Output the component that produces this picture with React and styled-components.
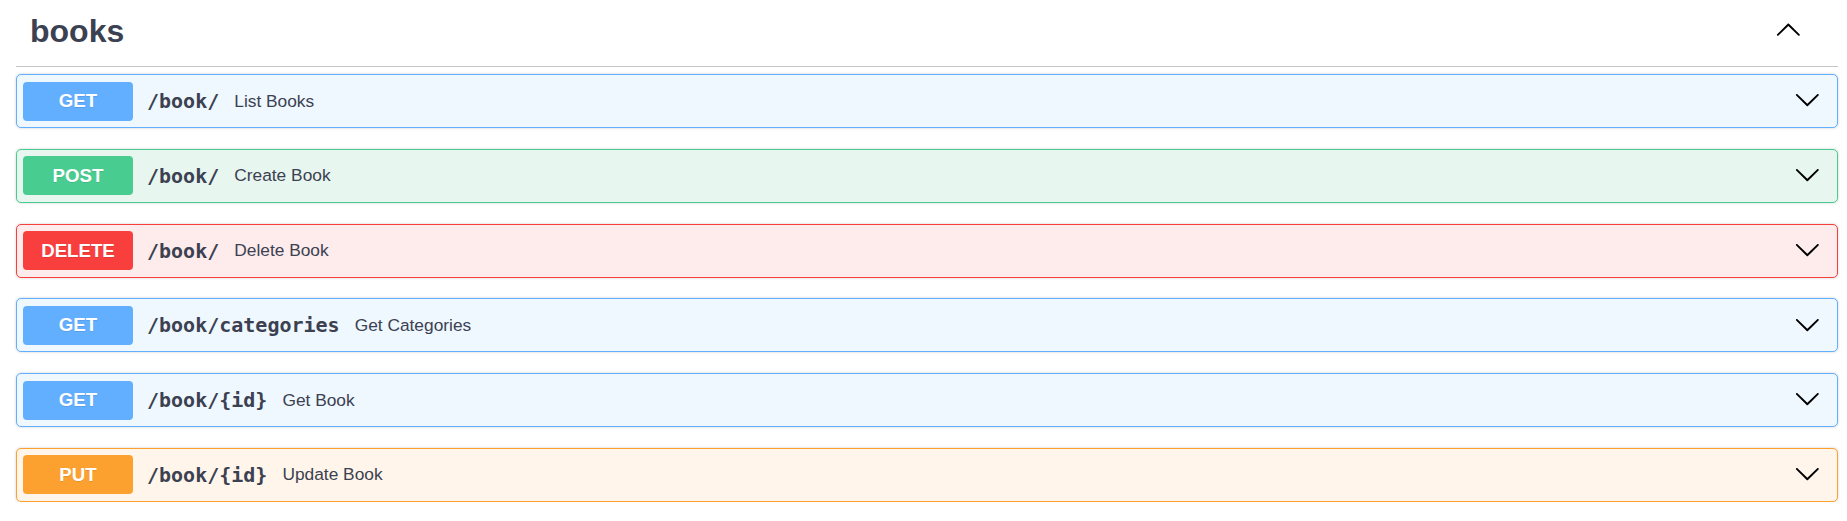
import React from "react";
import styled, { createGlobalStyle } from "styled-components";

const GlobalStyle = createGlobalStyle`
  html, body {
    margin: 0;
    padding: 0;
    background: #ffffff;
  }
  body {
    font-family: "Liberation Sans", Arial, sans-serif;
    color: #3b4151;
  }
`;

const METHODS = {
  get: { color: "#61affe", bg: "#eff7ff" },
  post: { color: "#49cc90", bg: "#e8f6f0" },
  delete: { color: "#f93e3e", bg: "#feebeb" },
  put: { color: "#fca130", bg: "#fff5ea" },
};

const operations = [
  { method: "get", path: "/book/", summary: "List Books" },
  { method: "post", path: "/book/", summary: "Create Book" },
  { method: "delete", path: "/book/", summary: "Delete Book" },
  { method: "get", path: "/book/categories", summary: "Get Categories" },
  { method: "get", path: "/book/{id}", summary: "Get Book" },
  { method: "put", path: "/book/{id}", summary: "Update Book" },
];

const Wrapper = styled.div`
  padding: 0 9px 0 16px;
`;

const TagSection = styled.section`
  display: flex;
  flex-direction: column;
`;

const TagHeader = styled.div`
  display: flex;
  align-items: center;
  justify-content: space-between;
  height: 66px;
  border-bottom: 1px solid rgba(59, 65, 81, 0.3);
  margin-bottom: 7px;
`;

const TagTitle = styled.h3`
  margin: 0;
  padding: 0 0 4px 14px;
  font-size: 32px;
  font-weight: 700;
  color: #3b4151;
`;

const ToggleButton = styled.button`
  display: flex;
  align-items: center;
  background: none;
  border: none;
  padding: 0 36px 5px 0;
  cursor: pointer;
`;

const OpList = styled.div`
  display: flex;
  flex-direction: column;
  gap: 20.8px;
`;

const OpBlock = styled.div`
  display: flex;
  align-items: center;
  height: 54px;
  box-sizing: border-box;
  padding: 0 6px;
  border: 1px solid ${(p) => METHODS[p.$method].color};
  background: ${(p) => METHODS[p.$method].bg};
  border-radius: 5px;
  box-shadow: 0 0 3px rgba(0, 0, 0, 0.19);
`;

const MethodBadge = styled.span`
  display: flex;
  align-items: center;
  justify-content: center;
  width: 110px;
  height: 39px;
  flex-shrink: 0;
  border-radius: 4px;
  background: ${(p) => METHODS[p.$method].color};
  color: #fff;
  font-size: 18.67px;
  font-weight: 700;
  text-shadow: 0 1px 0 rgba(0, 0, 0, 0.1);
`;

const OpPath = styled.span`
  padding: 0 15px 0 14px;
  font-family: "DejaVu Sans Mono", "Liberation Mono", monospace;
  font-size: 20px;
  font-weight: 700;
  color: #3b4151;
`;

const OpSummary = styled.span`
  flex: 1;
  font-size: 17.33px;
  color: #3b4151;
`;

const ArrowButton = styled.span`
  display: flex;
  padding: 0 10px 3px 0;
`;

const Chevron = ({ up }) => (
  <svg
    width="26.7"
    height="26.7"
    viewBox="0 0 20 20"
    style={up ? { transform: "rotate(180deg)" } : undefined}
  >
    <path
      fill="#000"
      d="M17.418 6.109c.272-.268.709-.268.979 0s.271.701 0 .969l-7.908 7.83c-.27.268-.707.268-.979 0l-7.908-7.83c-.27-.268-.27-.701 0-.969.271-.268.709-.268.979 0L10 13.25l7.418-7.141z"
    />
  </svg>
);

export default function App() {
  return (
    <Wrapper>
      <GlobalStyle />
      <TagSection>
        <TagHeader>
          <TagTitle>books</TagTitle>
          <ToggleButton aria-label="Collapse operation">
            <Chevron up />
          </ToggleButton>
        </TagHeader>
        <OpList>
          {operations.map((op, i) => (
            <OpBlock key={i} $method={op.method}>
              <MethodBadge $method={op.method}>{op.method.toUpperCase()}</MethodBadge>
              <OpPath>{op.path}</OpPath>
              <OpSummary>{op.summary}</OpSummary>
              <ArrowButton>
                <Chevron />
              </ArrowButton>
            </OpBlock>
          ))}
        </OpList>
      </TagSection>
    </Wrapper>
  );
}
